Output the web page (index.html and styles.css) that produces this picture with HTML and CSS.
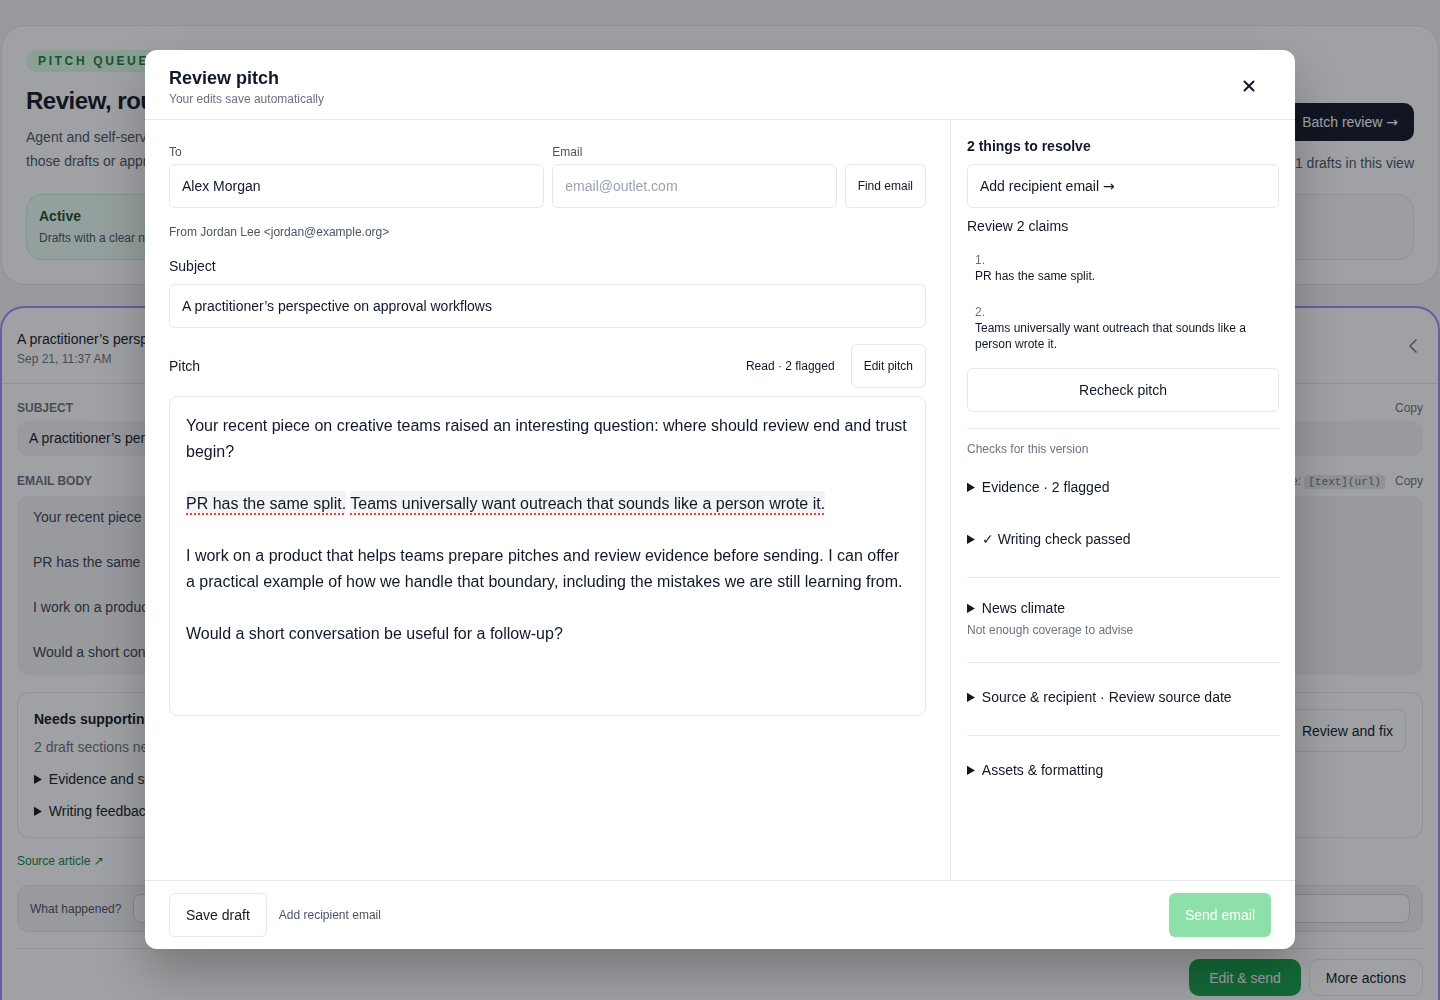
FILE: index.html
```html
<!DOCTYPE html>
<html lang="en">
<head>
    <meta charset="UTF-8">
    <meta name="viewport" content="width=device-width, initial-scale=1.0">
    <title>Pitch queue</title>
    <link rel="stylesheet" href="styles.css">
</head>
<body>
    <main class="queue">
        <section class="panel queue-header">
            <div class="header-row">
                <div class="header-text">
                    <span class="eyebrow">Pitch queue</span>
                    <h1>Review, route and send pitches</h1>
                    <p class="lead">Agent and self-serve drafts land here with their evidence attached. Review<br>those drafts or approve them once every check has passed.</p>
                </div>
                <div class="header-actions">
                    <button class="btn btn-dark">Batch review <span class="arrow">→</span></button>
                    <span class="count">1 drafts in this view</span>
                </div>
            </div>
            <div class="tabs">
                <div class="tab tab-active">
                    <strong>Active</strong>
                    <span>Drafts with a clear next step</span>
                </div>
                <div class="tab">
                    <strong>Waiting</strong>
                    <span>Drafts blocked on a reply</span>
                </div>
                <div class="tab">
                    <strong>Sent</strong>
                    <span>Pitches already delivered</span>
                </div>
            </div>
        </section>

        <section class="draft">
            <header class="draft-head">
                <div>
                    <div class="draft-title">A practitioner’s perspective on approval workflows</div>
                    <div class="draft-date">Sep 21, 11:37 AM</div>
                </div>
                <svg class="chevron" width="10" height="16" viewBox="0 0 10 16" fill="none" stroke="currentColor" stroke-width="1.5" stroke-linecap="round" stroke-linejoin="round">
                    <path d="M8 2 2 8l6 6"/>
                </svg>
            </header>
            <div class="draft-body">
                <div class="field-head">
                    <span class="caps">Subject</span>
                    <span class="copy">Copy</span>
                </div>
                <div class="readonly">A practitioner’s perspective on approval workflows</div>

                <div class="field-head field-head-gap">
                    <span class="caps">Email body</span>
                    <span class="copy">Links use: <code>[text](url)</code> &nbsp; Copy</span>
                </div>
                <div class="readonly body-copy">
                    <p>Your recent piece on creative teams raised an interesting question: where should review end and trust begin?</p>
                    <p>PR has the same split. Teams universally want outreach that sounds like a person wrote it.</p>
                    <p>I work on a product that helps teams prepare pitches and review evidence before sending. I can offer a practical example of how we handle that boundary.</p>
                    <p>Would a short conversation be useful for a follow-up?</p>
                </div>

                <div class="notice">
                    <div>
                        <strong>Needs supporting evidence</strong>
                        <p>2 draft sections need a source before this pitch can go out.</p>
                        <details><summary>Evidence and sources</summary></details>
                        <details><summary>Writing feedback</summary></details>
                    </div>
                    <button class="btn btn-outline">Review and fix</button>
                </div>

                <a class="source-link" href="#">Source article <span class="arrow">↗</span></a>

                <div class="feedback">
                    <span>What happened?</span>
                    <input type="text">
                </div>

                <div class="draft-actions">
                    <button class="btn btn-green">Edit &amp; send</button>
                    <button class="btn btn-outline">More actions</button>
                </div>
            </div>
        </section>
    </main>

    <div class="overlay">
        <div class="modal" role="dialog" aria-labelledby="modalTitle">
            <header class="modal-head">
                <div>
                    <h2 id="modalTitle">Review pitch</h2>
                    <p>Your edits save automatically</p>
                </div>
                <button class="close" aria-label="Close">
                    <svg width="12" height="12" viewBox="0 0 12 12" stroke="currentColor" stroke-width="2" stroke-linecap="round">
                        <path d="M1.5 1.5l9 9M10.5 1.5l-9 9"/>
                    </svg>
                </button>
            </header>

            <div class="modal-body">
                <div class="editor">
                    <div class="recipient">
                        <label class="field">
                            <span>To</span>
                            <input type="text" value="Alex Morgan">
                        </label>
                        <label class="field">
                            <span>Email</span>
                            <input type="email" placeholder="email@outlet.com">
                        </label>
                        <button class="btn btn-small">Find email</button>
                    </div>
                    <p class="from">From Jordan Lee &lt;jordan@example.org&gt;</p>

                    <label class="field field-lg">
                        <span>Subject</span>
                        <input type="text" value="A practitioner’s perspective on approval workflows">
                    </label>

                    <div class="pitch-head">
                        <span>Pitch</span>
                        <div class="pitch-tools">
                            <span>Read · 2 flagged</span>
                            <button class="btn btn-small">Edit pitch</button>
                        </div>
                    </div>
                    <div class="pitch">
                        <p>Your recent piece on creative teams raised an interesting question: where should review end and trust begin?</p>
                        <p><span class="claim">PR has the same split.</span> <span class="claim">Teams universally want outreach that sounds like a person wrote it.</span></p>
                        <p>I work on a product that helps teams prepare pitches and review evidence before sending. I can offer a practical example of how we handle that boundary, including the mistakes we are still learning from.</p>
                        <p>Would a short conversation be useful for a follow-up?</p>
                    </div>
                </div>

                <aside class="checks">
                    <h3>2 things to resolve</h3>
                    <button class="btn btn-block">Add recipient email <span class="arrow">→</span></button>
                    <div class="claims-title">Review 2 claims</div>
                    <ol class="claims">
                        <li><span class="num">1.</span>PR has the same split.</li>
                        <li><span class="num">2.</span>Teams universally want outreach that sounds like a person wrote it.</li>
                    </ol>
                    <button class="btn btn-block btn-center">Recheck pitch</button>

                    <div class="check-group check-group-first">
                        <div class="caption">Checks for this version</div>
                        <details><summary>Evidence · 2 flagged</summary></details>
                        <details><summary>✓ Writing check passed</summary></details>
                    </div>
                    <div class="check-group check-group-tight">
                        <details><summary>News climate</summary></details>
                        <div class="caption caption-sub">Not enough coverage to advise</div>
                    </div>
                    <div class="check-group">
                        <details><summary>Source &amp; recipient · Review source date</summary></details>
                    </div>
                    <div class="check-group">
                        <details><summary>Assets &amp; formatting</summary></details>
                    </div>
                </aside>
            </div>

            <footer class="modal-foot">
                <button class="btn btn-footer">Save draft</button>
                <span class="foot-note">Add recipient email</span>
                <button class="btn btn-send" disabled>Send email</button>
            </footer>
        </div>
    </div>
</body>
</html>
```

FILE: styles.css
```css
* {
    box-sizing: border-box;
}

body {
    margin: 0;
    font-family: "Liberation Sans", Arial, sans-serif;
    color: #111827;
    background: #f4f4f5;
    overflow: hidden;
}

button,
input {
    font-family: inherit;
    color: inherit;
}

.btn {
    border: 1px solid #e5e7eb;
    background: #fff;
    border-radius: 6px;
    cursor: pointer;
    white-space: nowrap;
}

/* arrows read better in DejaVu than in Liberation */
.arrow {
    font-family: "DejaVu Sans", sans-serif;
}

/* Page behind the dialog */
.queue {
    padding: 25px 1px 0;
    display: flex;
    flex-direction: column;
    gap: 21px;
}

.panel {
    background: #fff;
    border: 1px solid #e4e4e7;
    border-radius: 24px;
    padding: 24px;
}

.header-row {
    display: flex;
    justify-content: space-between;
    align-items: flex-end;
}

.eyebrow {
    display: inline-block;
    padding: 4px 12px;
    font-size: 12px;
    line-height: 14px;
    font-weight: 700;
    letter-spacing: 0.22em;
    text-transform: uppercase;
    color: #15803d;
    background: #dcfce7;
    border-radius: 999px;
}

h1 {
    margin: 13px 0 0;
    font-size: 24px;
    line-height: 32px;
    letter-spacing: -0.02em;
}

.lead {
    margin: 8px 0 0;
    font-size: 14px;
    line-height: 24px;
    color: #4b5563;
}

.header-actions {
    display: flex;
    flex-direction: column;
    align-items: flex-end;
    gap: 12px;
}

.btn-dark {
    height: 38px;
    padding: 0 16px;
    border: none;
    border-radius: 10px;
    background: #111827;
    color: #fff;
    font-size: 14px;
}

.count {
    font-size: 14px;
    line-height: 20px;
    color: #4b5563;
}

.tabs {
    margin-top: 21px;
    display: grid;
    grid-template-columns: repeat(3, 1fr);
    gap: 12px;
}

.tab {
    display: flex;
    flex-direction: column;
    gap: 4px;
    padding: 11px 12px 13px;
    border: 1px solid #e5e7eb;
    border-radius: 16px;
    background: #fafafa;
}

.tab strong {
    font-size: 14px;
    line-height: 20px;
    color: transparent;
}

.tab span {
    font-size: 12px;
    line-height: 16px;
    color: transparent;
}

.tab-active {
    background: #ecfdf3;
    border-color: #bbf7d0;
}

.tab-active strong {
    color: #14532d;
}

.tab-active span {
    color: #4b5563;
}

.draft {
    background: #fff;
    border: 2px solid #a78bfa;
    border-bottom: none;
    border-radius: 24px 24px 0 0;
    margin: 0 -1px;
}

.draft-head {
    display: flex;
    justify-content: space-between;
    align-items: center;
    padding: 21px 20px 16px 15px;
    border-bottom: 1px solid #e5e7eb;
}

.draft-title {
    font-size: 14px;
    line-height: 20px;
}

.draft-date {
    margin-top: 2px;
    font-size: 12px;
    line-height: 16px;
    color: #6b7280;
}

.chevron {
    display: block;
    margin-bottom: 4px;
    color: #6b7280;
}

.draft-body {
    padding: 16px 15px;
}

.field-head {
    display: flex;
    justify-content: space-between;
    align-items: center;
    height: 16px;
    font-size: 12px;
    line-height: 16px;
}

.field-head-gap {
    margin-top: 17px;
}

.caps {
    font-weight: 700;
    text-transform: uppercase;
    color: #6b7280;
}

.copy {
    color: #6b7280;
}

.copy code {
    font-family: "Liberation Mono", monospace;
    font-size: 11px;
    line-height: 14px;
    padding: 1px 4px;
    border-radius: 4px;
    background: #e5e7eb;
}

.readonly {
    margin-top: 5px;
    padding: 8px 12px;
    font-size: 14px;
    line-height: 19px;
    background: #f3f4f6;
    border-radius: 12px;
}

.body-copy {
    margin-top: 7px;
    padding: 10px 16px 12px;
    line-height: 22px;
    color: #374151;
}

.body-copy p {
    margin: 0;
}

.body-copy p + p {
    margin-top: 23px;
}

.notice {
    margin-top: 17px;
    display: flex;
    justify-content: space-between;
    align-items: flex-start;
    padding: 16px;
    border: 1px solid #e5e7eb;
    border-radius: 12px;
    font-size: 14px;
    line-height: 20px;
}

.notice p {
    margin: 8px 0 0;
    color: #6b7280;
}

.notice details {
    margin-top: 12px;
}

.btn-outline {
    height: 43px;
    padding: 0 12px;
    border-radius: 8px;
    font-size: 14px;
}

.source-link {
    display: inline-block;
    margin-top: 15px;
    font-size: 12px;
    line-height: 16px;
    color: #15803d;
    text-decoration: none;
}

.feedback {
    margin-top: 16px;
    display: flex;
    align-items: center;
    gap: 12px;
    padding: 8px 12px;
    background: #f3f4f6;
    border: 1px solid #e5e7eb;
    border-radius: 12px;
    font-size: 12px;
    color: #4b5563;
}

.feedback input {
    flex: 1;
    height: 29px;
    border: 1px solid #d1d5db;
    border-radius: 8px;
    background: #fff;
}

.draft-actions {
    margin-top: 16px;
    padding-top: 10px;
    border-top: 1px solid #e5e7eb;
    display: flex;
    justify-content: flex-end;
    gap: 8px;
}

.draft-actions .btn {
    height: 37px;
    border-radius: 10px;
}

.btn-green {
    padding: 0 20px;
    border: none;
    background: #16a34a;
    color: #fff;
    font-size: 14px;
}

.draft-actions .btn-outline {
    padding: 0 16px;
}

/* Dialog */
.overlay {
    position: fixed;
    inset: 0;
    padding-top: 50px;
    background: rgba(17, 19, 28, 0.4);
    display: flex;
    align-items: flex-start;
    justify-content: center;
}

.modal {
    width: 1150px;
    height: 899px;
    background: #fff;
    border-radius: 12px;
    box-shadow: 0 24px 48px rgba(0, 0, 0, 0.25);
    display: flex;
    flex-direction: column;
    overflow: hidden;
}

.modal-head {
    display: flex;
    justify-content: space-between;
    align-items: center;
    padding: 16px 24px 12px;
    border-bottom: 1px solid #e5e7eb;
}

.modal-head h2 {
    margin: 0;
    font-size: 18px;
    line-height: 24px;
}

.modal-head p {
    margin: 1px 0 0;
    font-size: 12px;
    line-height: 16px;
    color: #6b7280;
}

.close {
    width: 32px;
    height: 32px;
    margin: 0 6px 2px 0;
    border: none;
    background: none;
    display: flex;
    align-items: center;
    justify-content: center;
    color: #111827;
    cursor: pointer;
}

.modal-body {
    flex: 1;
    min-height: 0;
    display: grid;
    grid-template-columns: 1fr 345px;
}

.editor {
    padding: 24px;
}

.recipient {
    display: grid;
    grid-template-columns: minmax(0, 1.32fr) minmax(0, 1fr) auto;
    gap: 8px;
    align-items: end;
}

.field {
    display: block;
}

.field span {
    display: block;
    margin-bottom: 4px;
    font-size: 12px;
    line-height: 16px;
    color: #4b5563;
}

.field input {
    display: block;
    width: 100%;
    height: 44px;
    padding: 0 12px;
    border: 1px solid #e5e7eb;
    border-radius: 6px;
    font-size: 14px;
    outline: none;
}

.field input::placeholder {
    color: #9ca3af;
}

.btn-small {
    height: 44px;
    padding: 0 12px;
    font-size: 12px;
}

.from {
    margin: 16px 0 0;
    font-size: 12px;
    line-height: 16px;
    color: #4b5563;
}

.field-lg {
    margin-top: 16px;
}

.field-lg span {
    margin-bottom: 8px;
    font-size: 14px;
    line-height: 20px;
    color: #111827;
}

.pitch-head {
    margin-top: 16px;
    display: flex;
    justify-content: space-between;
    align-items: center;
    font-size: 14px;
}

.pitch-tools {
    display: flex;
    align-items: center;
    gap: 16px;
    font-size: 12px;
}

.pitch {
    margin-top: 8px;
    min-height: 320px;
    padding: 16px;
    border: 1px solid #e5e7eb;
    border-radius: 8px;
    font-size: 16px;
    line-height: 26px;
}

.pitch p {
    margin: 0 0 26px;
}

.claim {
    padding: 4px 0;
    background: #f3f4f6;
    border-radius: 4px;
    text-decoration: underline dotted #ef4444;
    text-decoration-thickness: 2px;
    text-underline-offset: 4px;
}

.checks {
    border-left: 1px solid #e5e7eb;
    padding: 16px;
    font-size: 14px;
    line-height: 20px;
}

.checks h3 {
    margin: 0;
    font-size: 14px;
    line-height: 20px;
}

.btn-block {
    display: block;
    width: 100%;
    height: 44px;
    margin-top: 8px;
    padding: 0 12px;
    font-size: 14px;
    text-align: left;
}

.btn-center {
    text-align: center;
}

.claims-title {
    margin-top: 8px;
}

.claims {
    list-style: none;
    margin: 8px 0 0;
    padding: 0;
    font-size: 12px;
    line-height: 16px;
}

.claims li {
    padding: 8px;
}

.claims li + li {
    margin-top: 4px;
}

.claims .num {
    display: block;
    color: #6b7280;
}

.check-group {
    margin-top: 16px;
    padding: 24px 0 28px;
    border-top: 1px solid #e5e7eb;
}

.check-group + .check-group {
    margin-top: 0;
}

.check-group-first {
    padding-top: 12px;
}

.check-group-tight {
    padding: 20px 0 24px;
}

.caption {
    font-size: 12px;
    line-height: 16px;
    color: #6b7280;
    margin-bottom: 20px;
}

.caption-sub {
    margin: 4px 0 0;
}

details + details {
    margin-top: 32px;
}

summary {
    cursor: pointer;
}

.modal-foot {
    display: flex;
    align-items: center;
    gap: 12px;
    padding: 12px 24px;
    border-top: 1px solid #e5e7eb;
}

.btn-footer {
    height: 44px;
    padding: 0 16px;
    font-size: 14px;
}

.foot-note {
    font-size: 12px;
    color: #4b5563;
}

.btn-send {
    margin-left: auto;
    height: 44px;
    padding: 0 16px;
    border: none;
    background: #8ee0a9;
    color: #fff;
    font-size: 14px;
}
```
